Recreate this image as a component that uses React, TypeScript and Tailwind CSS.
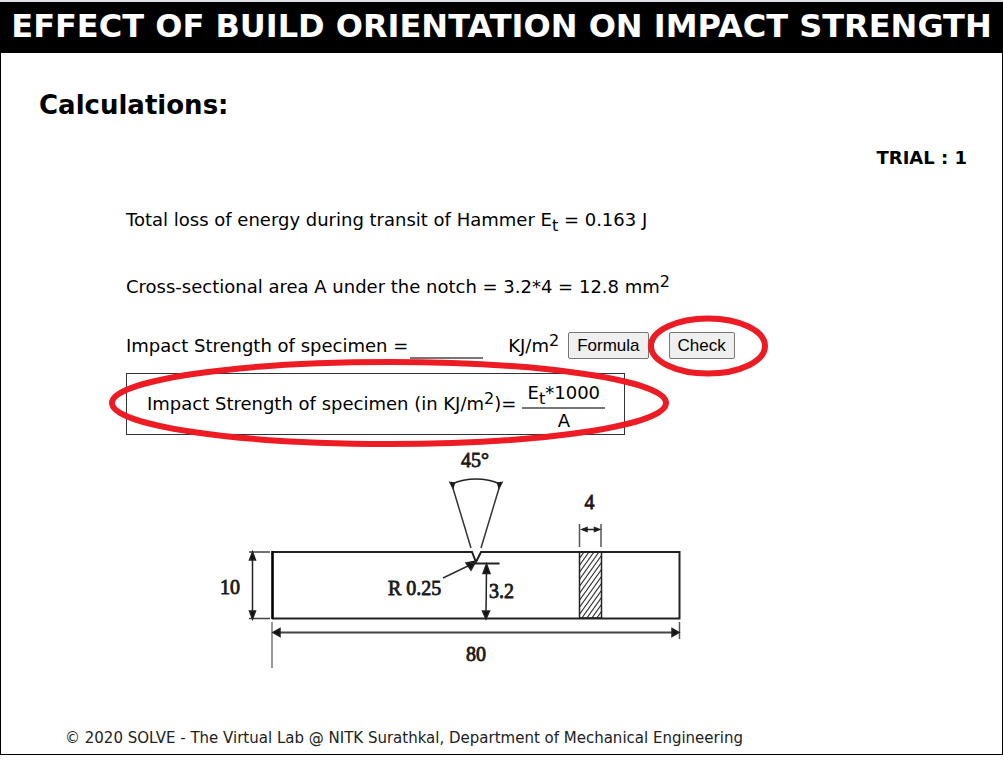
import React, { useState } from "react";

const BUTTON =
  "rounded-[2px] border border-[#767676] bg-[#efefef] px-2 font-['Liberation_Sans',sans-serif] text-[17px] leading-[25px] text-black";

function Sup({ children }: { children: React.ReactNode }) {
  return <sup className="top-[-6px] text-[16px] leading-none">{children}</sup>;
}

function Sub({ children }: { children: React.ReactNode }) {
  return <sub className="bottom-[-5px] text-[16px] leading-none">{children}</sub>;
}

function SpecimenDiagram() {
  return (
    <svg
      viewBox="210 445 480 230"
      className="block h-[230px] w-[480px]"
      role="img"
      aria-label="Notched specimen dimensions"
      fill="none"
      stroke="#222"
      strokeWidth="1.5"
    >
      <defs>
        <pattern id="hatch" x="579" y="552" width="5" height="7" patternUnits="userSpaceOnUse">
          <path d="M-1 8.400 L6 -1.400 M-1 1.400 L1 -1.400 M4 8.400 L6 5.600" stroke="#333" strokeWidth="1.1" />
        </pattern>
      </defs>

      {/* specimen outline with V notch */}
      <path d="M272 552 H472 L476 562 L481 552 H679.500 V618.500 H272" strokeWidth="2" />
      <path d="M272.500 551 V619" stroke="#000" strokeWidth="2.600" />

      {/* notch angle */}
      <path d="M452 485 L471 548 M500 485 L481 548" stroke="#333" />
      <path d="M452 484 Q463 479 476 479 Q489 479 500 484" />
      <path d="M450 482.500 L454.500 483 L453 488 Z M502 482.500 L497.500 483 L499 488 Z" fill="#111" />

      {/* notch radius leader */}
      <path d="M443 578 L470 565" stroke="#333" strokeWidth="1.700" />
      <path d="M476 561 L466 563 L471 570 Z" fill="#111" />
      <path d="M470 563.500 H499.500" strokeWidth="2" />

      {/* depth under the notch */}
      <path d="M486.500 570 L486 614" />
      <path d="M486.500 564 L483 573.500 H490 Z M486 619 L482.500 611 H489.500 Z" fill="#111" />

      {/* height */}
      <path d="M249 552 H270 M249 618.500 H270" stroke="#444" />
      <path d="M252.500 556 V614" />
      <path d="M252.500 552 L249.500 560 H255.500 Z M252.500 619 L249.500 611 H255.500 Z" fill="#111" />

      {/* hatched section */}
      <rect x="579.500" y="552" width="22" height="66" fill="url(#hatch)" />
      <path d="M579.500 524 V547 M601 524 V547" stroke="#555" />
      <path d="M585 529.500 H596" />
      <path d="M582 529.500 L587 527.500 V531.500 Z M599.500 529.500 L594.500 527.500 V531.500 Z" fill="#111" />

      {/* length */}
      <path d="M272 622 V668" stroke="#777" />
      <path d="M679.500 622 V639" stroke="#555" />
      <path d="M278 632.500 H674" strokeWidth="2" stroke="#444" />
      <path d="M273 632.500 L280 628.500 V636.500 Z M679 632.500 L672 628.500 V636.500 Z" fill="#111" />

      <g
        className="font-['Liberation_Serif',serif] text-[20px]"
        fill="#1a1a1a"
        stroke="#1a1a1a"
        strokeWidth="0.8"
      >
        <text x="461" y="467">45°</text>
        <text x="584.500" y="509">4</text>
        <text x="220" y="594">10</text>
        <text x="388" y="595">R 0.25</text>
        <text x="489" y="598">3.2</text>
        <text x="466" y="661">80</text>
      </g>
    </svg>
  );
}

export default function App() {
  const [answer, setAnswer] = useState("");

  return (
    <div className="bg-white font-['DejaVu_Sans',Verdana,sans-serif] text-[18px] leading-6 text-black">
      <div className="h-[2px] bg-[#dee1e6]" />
      <div className="border border-t-0 border-black">
        <header className="bg-black pt-[6px] pb-[9px]">
          <h1 className="text-center text-[32px] leading-9 font-bold whitespace-nowrap text-white">
            EFFECT OF BUILD ORIENTATION ON IMPACT STRENGTH
          </h1>
        </header>

        <main>
          <h2 className="mt-9 pl-[38px] text-[26px] leading-8 font-bold">Calculations:</h2>
          <p className="mt-[25px] pr-[35px] text-right font-bold">TRIAL : 1</p>

          <div className="pl-[125px] whitespace-nowrap">
            <p className="mt-[38px]">
              Total loss of energy during transit of Hammer E<Sub>t</Sub> = 0.163 J
            </p>
            <p className="mt-[43px]">
              Cross-sectional area A under the notch = 3.2*4 = 12.8 mm<Sup>2</Sup>
            </p>

            <div className="mt-[33px] flex items-center">
              <label htmlFor="strength">Impact Strength of specimen =</label>
              <input
                id="strength"
                value={answer}
                onChange={(e) => setAnswer(e.target.value)}
                className="ml-[2px] h-[27px] w-[73px] border-b-2 border-[#767676] outline-none"
              />
              <span className="ml-[25px]">
                KJ/m<Sup>2</Sup>
              </span>
              <button type="button" className={`ml-[9px] ${BUTTON}`}>
                Formula
              </button>
              <div className="relative ml-5">
                <button type="button" className={BUTTON}>
                  Check
                </button>
                <svg
                  viewBox="0 0 122 62"
                  className="pointer-events-none absolute top-[-17px] left-[-22px] h-[62px] w-[122px]"
                  aria-hidden="true"
                >
                  <ellipse cx="61" cy="31" rx="57" ry="27.500" fill="none" stroke="#ed1c24" strokeWidth="6" />
                </svg>
              </div>
            </div>

            <div className="relative mt-[14px] flex h-[62px] w-[499px] items-center border border-[#333] pl-5">
              <span>
                Impact Strength of specimen (in KJ/m<Sup>2</Sup>)=
              </span>
              <span className="ml-[6px] flex w-[83px] flex-col pt-[6px] text-center">
                <span className="border-b-2 border-[#767676] pb-[2px]">
                  E<Sub>t</Sub>*1000
                </span>
                <span>A</span>
              </span>
              <svg
                viewBox="0 0 560 88"
                className="pointer-events-none absolute top-[-15px] left-[-18px] h-[88px] w-[560px]"
                aria-hidden="true"
              >
                <ellipse cx="280" cy="44" rx="277" ry="41" fill="none" stroke="#ed1c24" strokeWidth="6" />
              </svg>
            </div>
          </div>

          <figure className="mt-[10px] pl-[209px]">
            <SpecimenDiagram />
          </figure>
        </main>

        <footer className="mt-[51px] pb-1 pl-16 text-[15px] text-[#222]">
          © 2020 SOLVE - The Virtual Lab @ NITK Surathkal, Department of Mechanical Engineering
        </footer>
      </div>
    </div>
  );
}
